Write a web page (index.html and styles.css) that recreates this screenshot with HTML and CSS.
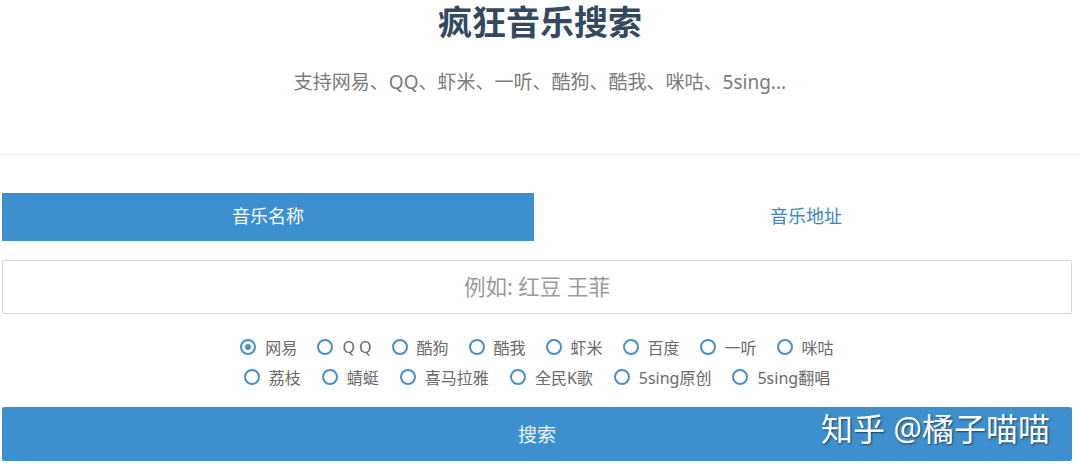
FILE: index.html
```html
<!DOCTYPE html>
<html lang="zh">
<head>
<meta charset="utf-8">
<title>疯狂音乐搜索</title>
<link rel="stylesheet" href="styles.css">
</head>
<body>
<div class="page">
  <header class="header">
    <h1 class="title">疯狂音乐搜索</h1>
    <p class="subtitle">支持网易、QQ、虾米、一听、酷狗、酷我、咪咕、5sing...</p>
  </header>
  <main class="main">
    <div class="tabs">
      <div class="tab active">音乐名称</div>
      <div class="tab">音乐地址</div>
    </div>
    <div class="input">例如: 红豆 王菲</div>
    <div class="radios">
      <div class="row row-first">
        <label class="radio"><span class="dot checked"></span>网易</label>
        <label class="radio"><span class="dot"></span>Q Q</label>
        <label class="radio"><span class="dot"></span>酷狗</label>
        <label class="radio"><span class="dot"></span>酷我</label>
        <label class="radio"><span class="dot"></span>虾米</label>
        <label class="radio"><span class="dot"></span>百度</label>
        <label class="radio"><span class="dot"></span>一听</label>
        <label class="radio"><span class="dot"></span>咪咕</label>
      </div>
      <div class="row">
        <label class="radio"><span class="dot"></span>荔枝</label>
        <label class="radio"><span class="dot"></span>蜻蜓</label>
        <label class="radio"><span class="dot"></span>喜马拉雅</label>
        <label class="radio"><span class="dot"></span>全民K歌</label>
        <label class="radio"><span class="dot"></span>5sing原创</label>
        <label class="radio"><span class="dot"></span>5sing翻唱</label>
      </div>
    </div>
    <div class="button-wrap">
      <div class="button">搜索</div>
      <div class="watermark">知乎 @橘子喵喵</div>
    </div>
  </main>
</div>
</body>
</html>
```
FILE: styles.css
```css
* { box-sizing: border-box; }
html, body { margin: 0; padding: 0; background: #fff; }
body {
  font-family: "Noto Sans", "Noto Sans CJK SC", sans-serif;
  width: 1080px;
  height: 476px;
  overflow: hidden;
}
.page { width: 1080px; }
.header {
  text-align: center;
  border-bottom: 1px solid #eeeeee;
  height: 155px;
}
.title {
  margin: 0;
  padding-top: 2px;
  font-size: 34px;
  line-height: 40px;
  font-weight: 700;
  color: #34495e;
}
.subtitle {
  margin: 20px 0 0;
  font-size: 19px;
  line-height: 40px;
  color: #7b7b7b;
}
.main {
  padding: 38px 8px 0 2px;
}
.tabs {
  display: flex;
  height: 48px;
  margin-right: -6px;
}
.tab {
  flex: 1;
  display: flex;
  align-items: center;
  justify-content: center;
  padding-bottom: 4px;
  font-size: 18px;
  color: #3b86c4;
}
.tab.active {
  flex: 0 0 532px;
  background: #3d8fce;
  color: #fff;
}
.input {
  margin-top: 19px;
  height: 54px;
  border: 1px solid #d6d6d6;
  border-radius: 2px;
  display: flex;
  align-items: center;
  justify-content: center;
  padding-bottom: 4px;
  font-size: 21.5px;
  color: #9a9a9a;
}
.radios {
  margin-top: 18px;
  display: flex;
  flex-direction: column;
  align-items: center;
}
.row {
  display: flex;
  gap: 21px;
  height: 30px;
  align-items: center;
}
.row-first { gap: 20px; }
.radio {
  display: flex;
  align-items: center;
  gap: 9px;
  font-size: 16px;
  color: #6a6a6a;
}
.dot {
  width: 16px;
  height: 16px;
  border: 2.5px solid #4a8fc6;
  border-radius: 50%;
  display: flex;
  align-items: center;
  justify-content: center;
}
.dot.checked::after {
  content: "";
  width: 6px;
  height: 6px;
  border-radius: 50%;
  background: #4a8fc6;
}
.button-wrap {
  position: relative;
  margin-top: 15px;
}
.button {
  height: 54px;
  background: #3d8fce;
  border-radius: 2px;
  display: flex;
  align-items: center;
  justify-content: center;
  font-size: 19px;
  color: #eaf3fb;
}
.watermark {
  position: absolute;
  right: 22px;
  top: 2px;
  font-size: 32px;
  line-height: 40px;
  color: #fff;
  text-shadow: 1px 1px 2px rgba(0,0,0,0.55);
}
```
